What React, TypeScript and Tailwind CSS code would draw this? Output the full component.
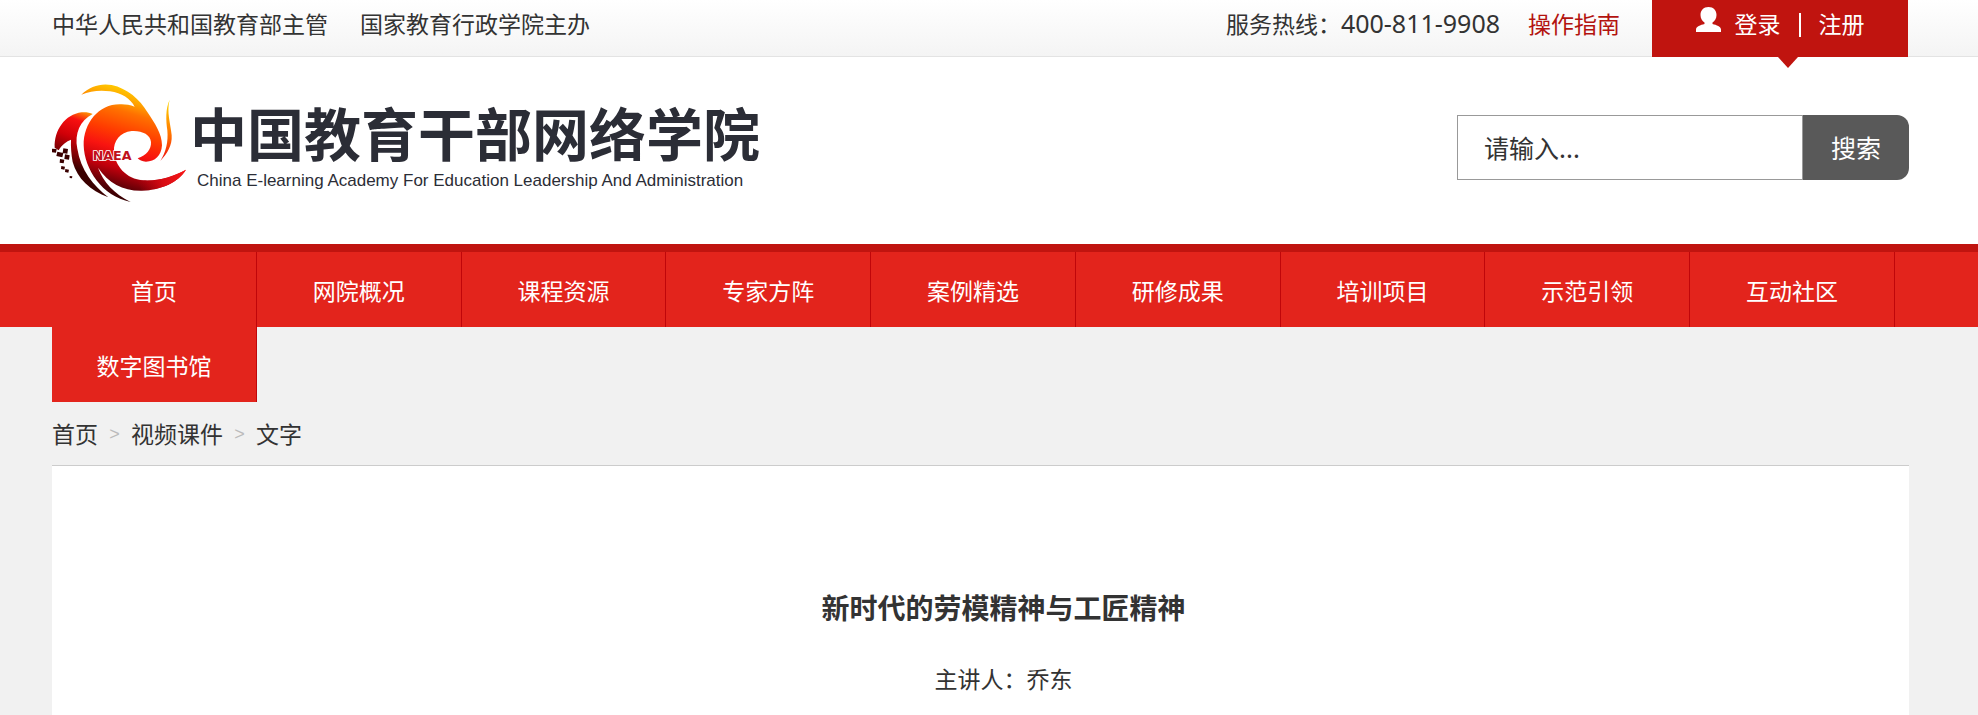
const navItems = [
  "首页",
  "网院概况",
  "课程资源",
  "专家方阵",
  "案例精选",
  "研修成果",
  "培训项目",
  "示范引领",
  "互动社区",
  "数字图书馆",
];

const crumbs = ["首页", "视频课件", "文字"];

function LogoMark() {
  return (
    <svg viewBox="36 38 405 363" className="w-[135px] h-[121px] shrink-0" aria-hidden="true">
      <defs>
        <linearGradient id="swirl" gradientUnits="userSpaceOnUse" x1="300" y1="60" x2="205" y2="385">
          <stop offset="0" stopColor="#ffd000" />
          <stop offset="0.12" stopColor="#ffa400" />
          <stop offset="0.22" stopColor="#ff7000" />
          <stop offset="0.4" stopColor="#ff3c00" />
          <stop offset="0.55" stopColor="#f81410" />
          <stop offset="0.72" stopColor="#c0000c" />
          <stop offset="0.88" stopColor="#5a0006" />
          <stop offset="1" stopColor="#2a0000" />
        </linearGradient>
        <linearGradient id="wing" gradientUnits="userSpaceOnUse" x1="150" y1="125" x2="90" y2="290">
          <stop offset="0" stopColor="#ffa000" />
          <stop offset="0.2" stopColor="#f81010" />
          <stop offset="0.5" stopColor="#d00008" />
          <stop offset="1" stopColor="#3a0000" />
        </linearGradient>
        <linearGradient id="feather" gradientUnits="userSpaceOnUse" x1="385" y1="90" x2="370" y2="270">
          <stop offset="0" stopColor="#ffd800" />
          <stop offset="0.6" stopColor="#ff6a00" />
          <stop offset="1" stopColor="#f01010" />
        </linearGradient>
        <linearGradient id="tail" gradientUnits="userSpaceOnUse" x1="290" y1="345" x2="438" y2="300">
          <stop offset="0" stopColor="#a0000c" stopOpacity="0" />
          <stop offset="0.5" stopColor="#d80c14" />
          <stop offset="1" stopColor="#f81818" />
        </linearGradient>
      </defs>
      <path
        fill="url(#swirl)"
        d="M124 73C150 48 182 38 215 44C262 54 300 88 322 125C345 160 366 190 366 225C364 256 345 274 318 274C306 274 298 269 293 264C320 255 334 237 333 215C331 192 305 180 275 182C240 186 220 212 222 243C224 285 258 327 310 330C355 333 400 318 438 298C415 335 365 359 305 361C250 362 205 338 174 292C190 335 222 370 272 395C185 378 133 295 131 225C130 155 180 98 245 102C258 102 270 104 284 109C272 86 245 67 210 63C180 59 150 62 124 73Z"
      />
      <path fill="url(#tail)" d="M290 327C345 336 395 322 438 298C415 335 365 359 305 361Z" />
      <path
        fill="url(#wing)"
        d="M158 131C120 150 103 190 112 235C122 300 160 345 205 381C150 360 112 325 98 275C94 252 92 230 93 208C80 212 64 225 56 240L44 232C42 180 75 132 125 126C138 125 150 127 158 131Z"
      />
      <path
        fill="url(#feather)"
        d="M389 88C376 115 378 150 382 180C385 215 378 245 361 272C382 250 397 225 395 195C392 160 379 125 389 88Z"
      />
      <g fill="#3a0000">
        <path d="M36 235l14 1l-2 11l-12-1zM52 244l18 4l-3 13l-18-4zM70 234l14 2l-2 14l-14-2zM60 266l13 2l-2 11l-12-2zM75 252l14 3l-2 13l-14-2zM64 287l11 2l-2 9l-10-2zM76 296l11 2l-2 9l-10-2zM89 317l8 1l-1 6l-7-1z" />
      </g>
      <g fontFamily='"DejaVu Sans", sans-serif' fontWeight="700" fontSize="38">
        <text x="158" y="270" fill="#c0101c" stroke="#fff" strokeWidth="5" paintOrder="stroke">
          NAEA
        </text>
      </g>
    </svg>
  );
}

function UserIcon() {
  return (
    <svg viewBox="0 0 25 25" className="w-[25px] h-[25px]" fill="#fff" aria-hidden="true">
      <path d="M12.500 0C17.500 0 20.500 3.500 20.500 8C20.500 11.500 18.800 14 16.500 15.500V17C20.500 18 25 19.500 25 22.500V25H0V22.500C0 19.500 4.500 18 8.500 17V15.500C6.200 14 4.500 11.500 4.500 8C4.500 3.500 7.500 0 12.500 0Z" />
    </svg>
  );
}

export default function App() {
  return (
    <div className="min-h-screen bg-[#f1f1f1] text-[#333] text-[23px] font-['Noto_Sans_CJK_SC',sans-serif]">
      {/* Top bar */}
      <div className="h-[57px] border-b border-[#e3e3e3] bg-linear-to-b from-white to-[#f4f4f4] pl-[52px] pr-[70px] flex items-start justify-between leading-[46px]">
        <div className="flex gap-8">
          <span>中华人民共和国教育部主管</span>
          <span>国家教育行政学院主办</span>
        </div>
        <div className="flex">
          <span>
            服务热线：<span className="font-['Noto_Sans'] text-[25px]">400-811-9908</span>
          </span>
          <a href="#guide" className="ml-[28px] text-[#b3130f]">
            操作指南
          </a>
          <div className="relative ml-[32px] w-[256px] h-[57px] bg-[#c0140f] text-white flex justify-center">
            <span className="mt-[7px] mr-[14px]">
              <UserIcon />
            </span>
            <a href="#login">登录</a>
            <span className="w-[38px] flex justify-center">
              <span className="mt-[13px] h-[24px] w-[2px] bg-white" />
            </span>
            <a href="#register">注册</a>
            <span className="absolute top-full left-[126px] border-x-[10px] border-t-[11px] border-x-transparent border-t-[#c0140f]" />
          </div>
        </div>
      </div>

      {/* Header */}
      <header className="bg-white pl-[52px] pr-[69px] pt-[26px] pb-[40px] flex items-start justify-between">
        <a href="#home" className="flex">
          <LogoMark />
          <div className="ml-[3px] mt-[10px] text-[#2b2d36]">
            <div className="text-[57px] leading-[76px] font-bold">中国教育干部网络学院</div>
            <div className="ml-[7px] font-['Liberation_Sans'] text-[17px] leading-[24px]">
              China E-learning Academy For Education Leadership And Administration
            </div>
          </div>
        </a>
        <form className="mt-8 flex h-[65px] text-[25px]">
          <input
            type="text"
            aria-label="搜索"
            placeholder="请输入..."
            className="w-[346px] border border-[#999] bg-white pl-[26px] placeholder:text-[#333] outline-none"
          />
          <button type="button" className="w-[106px] rounded-r-xl bg-[#595959] text-white">
            搜索
          </button>
        </form>
      </header>

      {/* Navigation, the last item wraps below the bar */}
      <nav className="border-t-8 border-[#c0140f] bg-[#e3241c] h-[83px] pl-[52px] pr-[83px]">
        <ul className="grid grid-cols-9">
          {navItems.map((item) => (
            <li key={item}>
              <a
                href="#nav"
                className="block h-[75px] border-r border-r-[#c0060a] bg-[#e3241c] text-center leading-[76px] text-white"
              >
                {item}
              </a>
            </li>
          ))}
        </ul>
      </nav>

      <main className="mt-[75px] ml-[52px] mr-[69px]">
        {/* Breadcrumb */}
        <div className="flex h-[63px] leading-[62px]">
          {crumbs.map((crumb, i) => (
            <span key={crumb} className="flex">
              {i > 0 && (
                <span className="w-[33px] text-center font-['Liberation_Sans'] text-[18px] leading-[64px] text-[#bbb]">
                  &gt;
                </span>
              )}
              <a href="#crumb">{crumb}</a>
            </span>
          ))}
        </div>

        <article className="min-h-[250px] border-t border-[#ccc] bg-white pl-[46px] pt-[117px] text-center">
          <h1 className="text-[28px] leading-[48px] font-bold">新时代的劳模精神与工匠精神</h1>
          <p className="mt-6 leading-[46px]">主讲人：乔东</p>
        </article>
      </main>
    </div>
  );
}
